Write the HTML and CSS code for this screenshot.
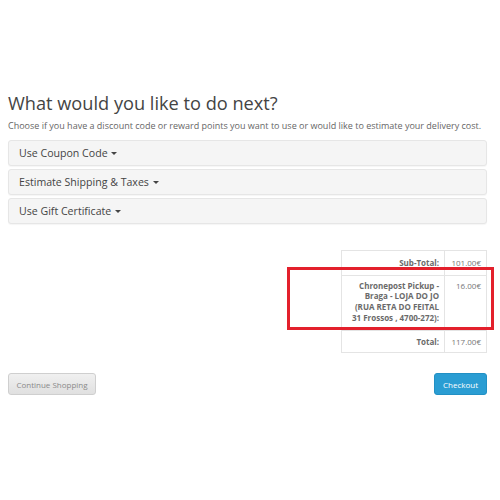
FILE: index.html
```html
<!DOCTYPE html>
<html>
<head>
<meta charset="utf-8">
<link rel="stylesheet" href="styles.css">
</head>
<body>
<div class="page">
  <h2 class="title">What would you like to do next?</h2>
  <p class="lead">Choose if you have a discount code or reward points you want to use or would like to estimate your delivery cost.</p>
  <div class="panels">
    <div class="panel">Use Coupon Code <span class="caret"></span></div>
    <div class="panel">Estimate Shipping &amp; Taxes <span class="caret"></span></div>
    <div class="panel">Use Gift Certificate <span class="caret"></span></div>
  </div>
  <div class="totals-wrap">
    <table class="totals">
      <tr class="r1"><td class="lbl">Sub-Total:</td><td class="val">101.00€</td></tr>
      <tr class="r2"><td class="lbl">Chronepost Pickup - Braga - LOJA DO JO (RUA RETA DO FEITAL 31 Frossos , 4700-272):</td><td class="val">16.00€</td></tr>
      <tr class="r3"><td class="lbl">Total:</td><td class="val">117.00€</td></tr>
    </table>
    <div class="highlight"></div>
  </div>
  <div class="buttons">
    <a class="btn btn-default">Continue Shopping</a>
    <a class="btn btn-primary">Checkout</a>
  </div>
</div>
</body>
</html>
```
FILE: styles.css
```css
html, body { margin: 0; padding: 0; background: #fff; }
body { font-family: "Open Sans", "DejaVu Sans", sans-serif; color: #555; }
.page { padding: 90px 13px 0 8px; }
.title { font-size: 18.2px; font-weight: 400; color: #444; margin: 0; line-height: 26px; }
.lead { font-size: 9px; color: #666; margin: 4px 0 0; line-height: 12px; }
.panels { margin-top: 8px; display: flex; flex-direction: column; gap: 3px; }
.panel { height: 24px; line-height: 24px; background: #f5f5f5; border: 1px solid #e6e6e6; border-radius: 3px; padding: 0 10px; font-size: 10.6px; color: #444; box-shadow: 0 1px 1px rgba(0,0,0,0.04); }
.caret { display: inline-block; width: 0; height: 0; border-left: 3px solid transparent; border-right: 3px solid transparent; border-top: 3.5px solid #444; vertical-align: middle; margin-left: 1px; position: relative; top: -1px; }
.totals-wrap { position: relative; display: flex; justify-content: flex-end; margin-top: 26px; }
.totals { border-collapse: collapse; width: 146px; font-size: 8px; color: #6a6a6a; }
.totals td { border: 1px solid #e4e4e4; padding: 4px 5px; vertical-align: top; line-height: 10.7px; }
.totals .lbl { text-align: right; font-weight: 700; width: 95px; }
.totals .val { text-align: right; width: 31px; color: #777; }
.r1 td { padding-top: 7px; padding-bottom: 6px; }
.r2 td { padding-top: 5px; padding-bottom: 6px; }
.r3 td { padding-top: 6px; padding-bottom: 5px; }
.highlight { position: absolute; left: 279px; top: 17px; width: 201px; height: 57px; border: 3px solid #e3202c; }
.buttons { display: flex; justify-content: space-between; margin-top: 20px; }
.btn { display: inline-block; height: 22px; line-height: 22px; font-size: 8px; border-radius: 3px; box-sizing: border-box; }
.btn-default { width: 88px; text-align: center; background: linear-gradient(#f0f0f0, #e0e0e0); border: 1px solid #cfcfcf; color: #8a8a8a; }
.btn-primary { width: 53px; text-align: center; background: #2a9dd3; border: 1px solid #2290c4; color: #fff; }
```
